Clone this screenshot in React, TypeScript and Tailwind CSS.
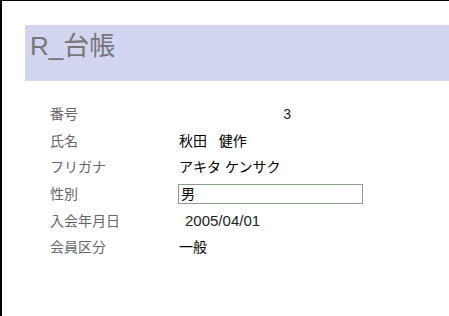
const font = { fontFamily: '"Liberation Sans", "Noto Sans CJK JP", sans-serif' }

const rows: { label: string; value: string; kind?: 'num' | 'input' | 'date' }[] = [
  { label: '番号', value: '3', kind: 'num' },
  { label: '氏名', value: '秋田   健作' },
  { label: 'フリガナ', value: 'アキタ ケンサク' },
  { label: '性別', value: '男', kind: 'input' },
  { label: '入会年月日', value: '2005/04/01', kind: 'date' },
  { label: '会員区分', value: '一般' },
]

export default function App() {
  return (
    <div
      className="w-[449px] h-[316px] bg-white border-t border-l-2 border-black overflow-hidden"
      style={font}
    >
      {/* Header band */}
      <div className="mt-[24px] ml-[23px] h-[56px] bg-[#d2d5f0] flex items-center pl-[5px]">
        <span className="text-[26px] leading-none text-[#777777] -mt-[14px]">R_台帳</span>
      </div>

      {/* Fields */}
      <div className="mt-[20px] ml-[48px] flex flex-col">
        {rows.map((row) => (
          <div key={row.label} className="h-[26.6px] flex items-center">
            <div className="w-[128px] text-[14px] text-[#666666] leading-none">{row.label}</div>
            {row.kind === 'num' && (
              <div className="w-[113px] text-right text-[14px] text-[#222] leading-none">{row.value}</div>
            )}
            {row.kind === 'input' && (
              <div className="w-[185px] h-[20px] border border-[#8c9a8c] flex items-center pl-[2px] text-[14px] text-black leading-none">
                {row.value}
              </div>
            )}
            {row.kind === 'date' && (
              <div className="pl-[7px] text-[15px] text-[#222] leading-none">{row.value}</div>
            )}
            {!row.kind && (
              <div className="pl-[1px] text-[14px] text-black leading-none whitespace-pre">{row.value}</div>
            )}
          </div>
        ))}
      </div>
    </div>
  )
}
